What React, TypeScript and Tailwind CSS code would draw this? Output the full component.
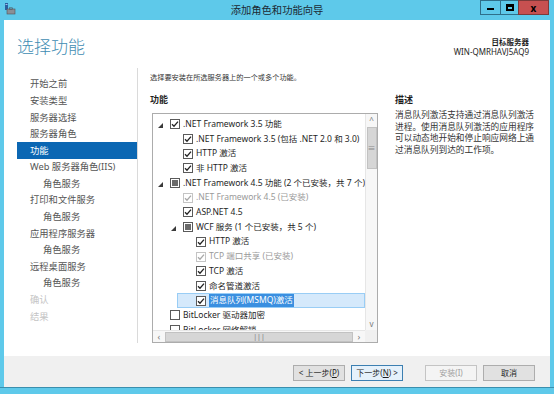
import type { ReactNode } from "react";

type Row = {
  label: string;
  level: 0 | 1 | 2;
  expander?: boolean;
  state: "checked" | "partial" | "unchecked";
  disabled?: boolean;
  selected?: boolean;
};

const rows: Row[] = [
  { label: ".NET Framework 3.5 功能", level: 0, expander: true, state: "checked" },
  { label: ".NET Framework 3.5 (包括 .NET 2.0 和 3.0)", level: 1, state: "checked" },
  { label: "HTTP 激活", level: 1, state: "checked" },
  { label: "非 HTTP 激活", level: 1, state: "checked" },
  { label: ".NET Framework 4.5 功能 (2 个已安装，共 7 个)", level: 0, expander: true, state: "partial" },
  { label: ".NET Framework 4.5 (已安装)", level: 1, state: "checked", disabled: true },
  { label: "ASP.NET 4.5", level: 1, state: "checked" },
  { label: "WCF 服务 (1 个已安装，共 5 个)", level: 1, expander: true, state: "partial" },
  { label: "HTTP 激活", level: 2, state: "checked" },
  { label: "TCP 端口共享 (已安装)", level: 2, state: "checked", disabled: true },
  { label: "TCP 激活", level: 2, state: "checked" },
  { label: "命名管道激活", level: 2, state: "checked" },
  { label: "消息队列(MSMQ)激活", level: 2, state: "checked", selected: true },
  { label: "BitLocker 驱动器加密", level: 0, state: "unchecked" },
  { label: "BitLocker 网络解锁", level: 0, state: "unchecked" },
];

const levelPad = ["pl-[4px]", "pl-[17px]", "pl-[30px]"];

const navItems: { label: string; sub?: boolean; active?: boolean; muted?: boolean }[] = [
  { label: "开始之前" },
  { label: "安装类型" },
  { label: "服务器选择" },
  { label: "服务器角色" },
  { label: "功能", active: true },
  { label: "Web 服务器角色(IIS)" },
  { label: "角色服务", sub: true },
  { label: "打印和文件服务" },
  { label: "角色服务", sub: true },
  { label: "应用程序服务器" },
  { label: "角色服务", sub: true },
  { label: "远程桌面服务" },
  { label: "角色服务", sub: true },
  { label: "确认", muted: true },
  { label: "结果", muted: true },
];

const Checkbox = ({ state, disabled }: { state: Row["state"]; disabled?: boolean }) => (
  <div
    className={`grid h-[10px] w-[10px] shrink-0 place-items-center border bg-white ${
      disabled ? "border-[#c4c4c4]" : "border-[#5a5a5a]"
    }`}
  >
    {state === "checked" && (
      <svg width="8" height="8" viewBox="0 0 8 8">
        <path
          d="M1 4.2 L3 6.2 L7 1.6"
          fill="none"
          stroke={disabled ? "#a8a8a8" : "#222"}
          strokeWidth="1.3"
        />
      </svg>
    )}
    {state === "partial" && <div className="h-[6px] w-[6px] bg-[#6a6a6a]" />}
  </div>
);

const Expander = () => (
  <svg width="5" height="5" viewBox="0 0 5 5" className="mt-[2px]">
    <polygon points="5,0 5,5 0,5" fill="#3a3a3a" />
  </svg>
);

const TreeRow = ({ row }: { row: Row }) => {
  const content: ReactNode = (
    <>
      <div className="flex w-[13px] shrink-0 items-center pl-[1px]">
        {row.expander && <Expander />}
      </div>
      <Checkbox state={row.state} disabled={row.disabled} />
      <span
        className={`ml-[3px] whitespace-nowrap ${
          row.selected ? "bg-[#3a8fe0] px-[1px] text-white" : ""
        } ${row.disabled ? "text-[#9a9a9a]" : ""}`}
      >
        {row.label}
      </span>
    </>
  );

  if (row.selected) {
    return (
      <div className="flex h-[14.7px] items-center">
        <div className="w-[24px] shrink-0" />
        <div className="flex h-full flex-1 items-center border border-[#99cdf5] bg-[#d5e9fb] pl-[5px]">
          {content}
        </div>
      </div>
    );
  }

  return <div className={`flex h-[14.7px] items-center ${levelPad[row.level]}`}>{content}</div>;
};

const WindowIcon = () => (
  <svg width="12" height="12" viewBox="0 0 12 12">
    <rect x="1" y="0" width="3" height="7" fill="#2b5f9e" />
    <rect x="1.5" y="1" width="2" height="1" fill="#9cc3ea" />
    <rect x="3" y="6" width="8" height="5" fill="#8a8f96" stroke="#4e5359" strokeWidth="0.6" />
    <rect x="5.5" y="4.8" width="3" height="1.4" fill="none" stroke="#4e5359" strokeWidth="0.6" />
  </svg>
);

const App = () => {
  return (
    <div className="flex h-[394px] w-[554px] flex-col overflow-hidden bg-[#5ec9ea] font-['Noto_Sans','Noto_Sans_CJK_SC',sans-serif] text-[10px] text-[#1e1e1e]">
      {/* title bar */}
      <div className="flex h-[20px] shrink-0 items-start">
        <div className="flex w-[20px] justify-center pt-[3px]">
          <WindowIcon />
        </div>
        <div className="flex-1 pl-[54px] pt-[3px] text-center text-[10.3px] leading-[14px] text-[#1c2a33]">
          添加角色和功能向导
        </div>
        <div className="mr-[5px] flex h-[15px]">
          <div className="grid w-[20px] place-items-end justify-center border border-r-0 border-[#2f6f8a] pb-[4px]">
            <div className="h-[2px] w-[7px] bg-black" />
          </div>
          <div className="grid w-[18px] place-items-center border border-r-0 border-[#2f6f8a]">
            <div className="h-[7px] w-[8px] border-2 border-t-[3px] border-black" />
          </div>
          <div className="grid w-[31px] place-items-center border border-[#7c3a3a] bg-[#c75050] text-[10px] font-bold leading-none text-black">
            x
          </div>
        </div>
      </div>

      {/* main white area */}
      <div className="mx-[4px] flex h-[336px] shrink-0 flex-col bg-white">
        <div className="flex h-[48px] shrink-0 justify-between pl-[13px] pr-[21px]">
          <div className="pt-[16px] text-[17px] font-light leading-[22px] text-[#3f8db3]">
            选择功能
          </div>
          <div className="pt-[18px] text-right">
            <div className="text-[7.5px] font-bold leading-[9px]">目标服务器</div>
            <div className="text-[8px] leading-[10px]">WIN-QMRHAVJ5AQ9</div>
          </div>
        </div>

        <div className="flex h-[275px] shrink-0">
          {/* left nav */}
          <nav className="flex w-[134px] shrink-0 flex-col border-r border-[#dadada] pt-[8px] text-[9.3px] text-[#555]">
            {navItems.map((item, index) => (
              <div
                key={index}
                className={`ml-[13px] flex h-[16.6px] items-center whitespace-nowrap ${
                  item.sub ? "pl-[26px]" : "pl-[13px]"
                } ${item.active ? "bg-[#0b67b3] text-white" : ""} ${
                  item.muted ? "text-[#c4c4c4]" : ""
                }`}
              >
                {item.label}
              </div>
            ))}
          </nav>

          {/* content */}
          <section className="flex flex-1 flex-col pl-[12px] pt-[2px]">
            <p className="h-[14px] text-[7.2px] leading-[14px] text-[#333]">
              选择要安装在所选服务器上的一个或多个功能。
            </p>

            <div className="mt-[9px] flex">
              <div className="flex w-[228px] shrink-0 flex-col">
                <h2 className="h-[14px] text-[9px] leading-[14px] font-bold">功能</h2>
                <div className="ml-[2px] mt-[6px] grid h-[230px] w-[226px] grid-cols-[1fr_12px] grid-rows-[1fr_12px] border border-[#acacac]">
                  <div className="overflow-hidden pt-[3px] text-[8.5px]">
                    {rows.map((row, index) => (
                      <TreeRow key={index} row={row} />
                    ))}
                  </div>

                  {/* vertical scrollbar */}
                  <div className="flex flex-col items-center border-l border-[#e6e6e6] bg-[#f7f7f7] text-[#777]">
                    <div className="flex h-[12px] items-center text-[8px] leading-none">^</div>
                    <div className="mt-[1px] flex h-[42px] w-[10px] items-center justify-center border border-[#c2c2c2] bg-[#d6d6d6] text-[8px] leading-none text-[#888]">
                      ≡
                    </div>
                    <div className="flex-1" />
                    <div className="flex h-[12px] items-center text-[8px] leading-none">v</div>
                  </div>

                  {/* horizontal scrollbar */}
                  <div className="flex items-center border-t border-[#e6e6e6] bg-[#f7f7f7] text-[#777]">
                    <div className="flex w-[12px] justify-center text-[9px] leading-none">‹</div>
                    <div className="flex h-[10px] flex-1 items-center justify-center border border-[#c2c2c2] bg-[#d6d6d6] text-[7px] leading-none text-[#777]">
                      |||
                    </div>
                    <div className="flex w-[12px] justify-center text-[9px] leading-none">›</div>
                  </div>
                  <div className="bg-[#f0f0f0]" />
                </div>
              </div>

              <div className="ml-[17px] flex w-[150px] flex-col">
                <h2 className="h-[14px] text-[9px] leading-[14px] font-bold">描述</h2>
                <p className="mt-[3px] text-[8.7px] leading-[11.7px] text-[#333]">
                  消息队列激活支持通过消息队列激活
                  <br />
                  进程。使用消息队列激活的应用程序
                  <br />
                  可以动态地开始和停止响应网络上通
                  <br />
                  过消息队列到达的工作项。
                </p>
              </div>
            </div>
          </section>
        </div>
      </div>

      {/* footer */}
      <div className="mx-[4px] flex h-[31px] shrink-0 items-start bg-[#f0f0f0] pt-[9px] text-[8px]">
        <div className="ml-[289px] flex h-[16px] w-[52px] items-center justify-center border border-[#adadad] bg-[#e1e1e1]">
          &lt; 上一步(<span className="underline">P</span>)
        </div>
        <div className="ml-[6px] flex h-[16px] w-[52px] items-center justify-center border border-[#3c7fb1] bg-[#e5f1fb]">
          下一步(<span className="underline">N</span>) &gt;
        </div>
        <div className="ml-[22px] flex h-[16px] w-[52px] items-center justify-center border border-[#c4c4c4] bg-[#f4f4f4] text-[#a0a0a0]">
          安装(I)
        </div>
        <div className="ml-[6px] flex h-[16px] w-[52px] items-center justify-center border border-[#adadad] bg-[#e1e1e1]">
          取消
        </div>
      </div>
      <div className="h-[1px] shrink-0 bg-[#3a8fae]" />
    </div>
  );
};

export default App;
